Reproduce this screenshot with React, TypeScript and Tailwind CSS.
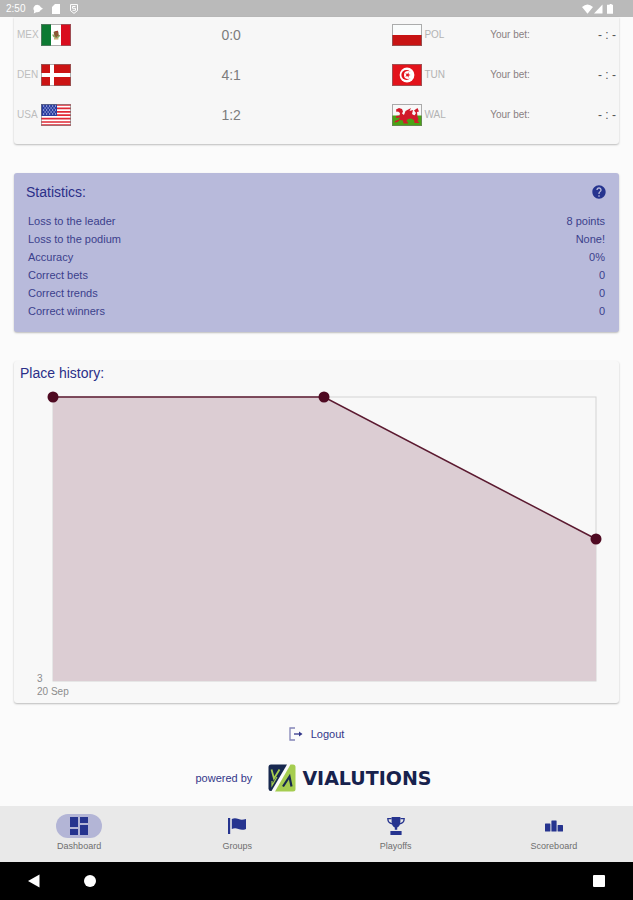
import type { ReactNode } from "react";
import { MdDashboard, MdHelp } from "react-icons/md";

function FlagFrame({ children }: { children: ReactNode }) {
  return (
    <svg viewBox="0 0 30 22" className="h-[22px] w-[30px] shrink-0" aria-hidden="true">
      {children}
      <rect x="0.5" y="0.5" width="29" height="21" fill="none" stroke="#777" strokeOpacity="0.6" />
    </svg>
  );
}

const flags: Record<string, ReactNode> = {
  MEX: (
    <>
      <rect width="30" height="22" fill="#fff" />
      <rect width="10" height="22" fill="#0d7a33" />
      <rect x="20" width="10" height="22" fill="#d90d1e" />
      <path d="M12 10.5a3.3 3.5 0 0 0 6.4.5" fill="none" stroke="#8fa860" strokeWidth="1.6" />
      <path d="M12.6 8q2.4-2 4.6-.4l.6 3.8-2.6 2.2-1.8-1.6z" fill="#8a5a34" />
      <path d="M14.5 7.6l2-1 .8 2z" fill="#a7322c" />
      <path d="M13 14.8h4.4" stroke="#c9a56a" strokeWidth="1.4" />
    </>
  ),
  DEN: (
    <>
      <rect width="30" height="22" fill="#cc1414" />
      <path d="M0 11h30M11 0v22" stroke="#fff" strokeWidth="4" />
    </>
  ),
  USA: (
    <>
      <rect width="30" height="22" fill="#fff" />
      <path
        d="M0 1h30M0 4.4h30M0 7.8h30M0 11.2h30M0 14.6h30M0 18h30M0 21h30"
        stroke="#e02a36"
        strokeWidth="1.7"
      />
      <rect width="16" height="12" fill="#2a3da0" />
      <path
        d="M2 2h13M3.5 4h11M2 6h13M3.5 8h11M2 10h13"
        stroke="#dfe4ff"
        strokeWidth="1"
        strokeDasharray="1.2 1.8"
      />
    </>
  ),
  POL: (
    <>
      <rect width="30" height="22" fill="#fafcfc" />
      <rect y="11" width="30" height="11" fill="#c81414" />
    </>
  ),
  TUN: (
    <>
      <rect width="30" height="22" fill="#e3131b" />
      <circle cx="15" cy="11" r="7.4" fill="#fff" />
      <circle cx="14.4" cy="11" r="5" fill="#e3131b" />
      <circle cx="16" cy="11" r="4" fill="#fff" />
      <path d="M18.6 11l-2 .7v2l-1.3-1.6-2 .6 1.2-1.7-1.2-1.7 2 .6 1.3-1.6v2z" fill="#e3131b" />
    </>
  ),
  WAL: (
    <>
      <rect width="30" height="22" fill="#f8f8f8" />
      <rect y="11.5" width="30" height="10.5" fill="#4aa316" />
      <path
        d="M4 5.5l3-1.5 3 1 1 2.5-1 2 2 1.5 1.5-4L19 4l-1.5 3L21 6l-1 4 2.5 1.5L24 9l-2-2.5L25.5 4 27 7.5l-2 .5.5 4.500 1 2.5-1 2.5 1.5.5v1h-4.500l-.5-3-3-1.5-3 .5-1.5 2 1.5 1.5v1h-4.500l-.5-3-3-.5-2.5 2-3 .5.5-1.5L7 15.5l1-2-4 .5v-2l3.5-.5.5-2.5-2-1.5L4.5 8z"
        fill="#d11a2a"
      />
      <path d="M12.5 11l3-4.500 3.500 3.500-2 4z" fill="#d11a2a" />
    </>
  ),
};

const matches = [
  { home: "MEX", score: "0:0", away: "POL" },
  { home: "DEN", score: "4:1", away: "TUN" },
  { home: "USA", score: "1:2", away: "WAL" },
];

const stats = [
  { label: "Loss to the leader", value: "8 points" },
  { label: "Loss to the podium", value: "None!" },
  { label: "Accuracy", value: "0%" },
  { label: "Correct bets", value: "0" },
  { label: "Correct trends", value: "0" },
  { label: "Correct winners", value: "0" },
];

const navItems = [
  { label: "Dashboard", icon: <MdDashboard className="size-6" />, active: true },
  {
    label: "Groups",
    icon: (
      <svg viewBox="0 0 20 20" className="size-5" fill="currentColor">
        <rect x="1" y="2" width="2.2" height="16" />
        <path d="M4.8 3c2.4-1.3 4.4-1 6.8.1 2.2 1 4.4.9 7.4-.1v10c-2.6 1.1-5 1.1-7.6.1-2.4-1-4.2-1-6.6-.1z" />
      </svg>
    ),
  },
  {
    label: "Playoffs",
    icon: (
      <svg viewBox="0 0 20 20" className="size-5" fill="currentColor">
        <path d="M5.6 1h8.8v4.6c0 3.2-1.4 5.2-3.2 5.9v2.3H8.8v-2.3C7 10.8 5.6 8.8 5.6 5.6z" />
        <path
          d="M5.6 2.6H1.8c0 3 1.6 4.8 4.4 5.2M14.4 2.6h3.8c0 3-1.6 4.8-4.4 5.2"
          fill="none"
          stroke="currentColor"
          strokeWidth="1.3"
        />
        <rect x="4.4" y="15" width="11.2" height="4" rx="0.5" />
      </svg>
    ),
  },
  {
    label: "Scoreboard",
    icon: (
      <svg viewBox="0 0 20 20" className="size-5" fill="currentColor">
        <rect x="1" y="7.5" width="5.4" height="8" rx="0.5" />
        <rect x="7.4" y="4.5" width="5.2" height="11" rx="0.5" />
        <rect x="13.6" y="9" width="5.4" height="6.5" rx="0.5" />
      </svg>
    ),
  },
];

function StatusBar() {
  return (
    <header className="flex h-[17px] items-center justify-between bg-[#bababa] pr-[19px] pl-1.5 text-white">
      <div className="flex items-center gap-2">
        <span className="text-[10px] leading-3">2:50</span>
        <svg viewBox="0 0 10 10" className="size-2.5" fill="currentColor">
          <path d="M4.2.8a4 3.8 0 0 1 3.7 2.5L10 4.8 7.8 6a4 3.8 0 0 1-4.6 2.2L.8 9.4 1.2 6.800A4 3.8 0 0 1 4.2.8z" />
        </svg>
        <svg viewBox="0 0 10 10" className="size-2.5" fill="currentColor">
          <path d="M4 0h5v10H1V3z" />
        </svg>
        <svg viewBox="0 0 10 10" className="size-2.5" fill="none" stroke="currentColor">
          <path d="M1.5.6h7v6L5 9.4 1.5 6.6zM6.5 2.5h-3v1.8h3v2H3.5" />
        </svg>
      </div>
      <svg viewBox="0 0 32 10" className="h-2.5 w-8" fill="currentColor">
        <path d="M0 3q5.5-5 11 0L5.5 9.8zM12 9.5L20.5.5v9zM26.5.8h1.2V0h2v.8H31v9h-6v-9z" />
      </svg>
    </header>
  );
}

function Matches() {
  return (
    <section className="rounded-b-[3px] bg-[#f7f7f7] px-[3px] pt-[7px] shadow-[0_1px_2px_rgba(0,0,0,0.25)]">
      <table className="w-full table-fixed border-collapse">
        <colgroup>
          <col className="w-[12.5%]" />
          <col className="w-[46.5%]" />
          <col className="w-[20%]" />
          <col className="w-[12%]" />
          <col className="w-[9%]" />
        </colgroup>
        <tbody>
          {matches.map((m) => (
            <tr key={m.home} className="h-10 align-top text-[10px] leading-[22px]">
              <td>
                <div className="flex items-center gap-0.5 text-[#bdbdbd]">
                  <span className="w-[22px]">{m.home}</span>
                  <FlagFrame>{flags[m.home]}</FlagFrame>
                </div>
              </td>
              <td className="text-center text-sm leading-[22px] text-[#7c7c7c]">{m.score}</td>
              <td>
                <div className="flex items-center gap-0.5 pl-[22px] text-[#b3b3b3]">
                  <FlagFrame>{flags[m.away]}</FlagFrame>
                  <span>{m.away}</span>
                </div>
              </td>
              <td className="text-[#8a7f82]">Your bet:</td>
              <td className="text-right text-xs leading-[22px] text-[#555]">- : -</td>
            </tr>
          ))}
        </tbody>
      </table>
    </section>
  );
}

function Statistics() {
  return (
    <section className="rounded-[3px] bg-[#b8badb] px-3 pt-[9px] pb-3 shadow-[0_1px_2px_rgba(0,0,0,0.25)]">
      <div className="flex items-center justify-between">
        <h2 className="text-sm text-[#2b2f88]">Statistics:</h2>
        <button type="button" aria-label="Help" className="text-[#26348f]">
          <MdHelp className="size-4" />
        </button>
      </div>
      <table className="mt-2.5 w-full text-[11px] leading-[18px] text-[#3b3f8c]">
        <tbody>
          {stats.map((s) => (
            <tr key={s.label}>
              <th scope="row" className="pl-0.5 text-left font-normal">
                {s.label}
              </th>
              <td className="pr-0.5 text-right">{s.value}</td>
            </tr>
          ))}
        </tbody>
      </table>
    </section>
  );
}

function PlaceHistory() {
  return (
    <section className="rounded-[3px] bg-[#f8f8f8] pt-0.5 shadow-[0_1px_2px_rgba(0,0,0,0.25)]">
      <h2 className="pl-1.5 text-sm text-[#2b2f88]">Place history:</h2>
      <svg viewBox="0 0 605 320" className="block w-full" role="img" aria-label="Place history">
        <rect x="39" y="14" width="543" height="284" fill="none" stroke="#d4d4d4" />
        <path d="M39 14H310L582 156V298H39z" fill="#dccdd3" />
        <path d="M39 14H310L582 156" fill="none" stroke="#5b1a30" strokeWidth="1.5" />
        <g fill="#4f0a22">
          <circle cx="39" cy="14" r="5.5" />
          <circle cx="310" cy="14" r="5.5" />
          <circle cx="582" cy="156" r="5.5" />
        </g>
        <g fill="#8c8c8c" fontSize="10">
          <text x="23" y="299">3</text>
          <text x="23" y="312">20 Sep</text>
        </g>
      </svg>
    </section>
  );
}

function VialutionsLogo() {
  return (
    <svg viewBox="0 0 28 28" className="size-7" aria-hidden="true">
      <path d="M3 .5H19L3.5 27Q.5 27.5.5 24.500V3Q.5.5 3 .5z" fill="#17284f" />
      <path d="M25 27.5H7L22.500.5H25Q27.5.5 27.5 3V25Q27.5 27.5 25 27.500z" fill="#a5cd50" />
      <path d="M3.5 5.5L6 14.5 11.500 5.500" fill="none" stroke="#a5cd50" strokeWidth="1.8" />
      <path d="M4 17v4.500L9 13" fill="none" stroke="#a5cd50" strokeWidth="1.200" />
      <path d="M15 22.500L21.500 12.500 23.500 22.500" fill="none" stroke="#17284f" strokeWidth="2.200" />
    </svg>
  );
}

function BottomNav() {
  return (
    <nav className="grid h-14 grid-cols-4 bg-[#e9e9e9]">
      {navItems.map((item) => (
        <button
          key={item.label}
          type="button"
          className="flex flex-col items-center gap-0.5 pt-2 text-[#26348f]"
        >
          <span
            className={
              item.active
                ? "flex h-6 w-[46px] items-center justify-center rounded-full bg-[#b3b5d6]"
                : "flex h-6 w-[46px] items-center justify-center"
            }
          >
            {item.icon}
          </span>
          <span className="text-[9px] leading-3 text-[#6e6e6e]">{item.label}</span>
        </button>
      ))}
    </nav>
  );
}

export default function App() {
  return (
    <div className="bg-[#fbfbfb] font-['Liberation_Sans',Arial,sans-serif]">
      <StatusBar />
      <main className="px-3.5">
        <div className="flex flex-col gap-[29px]">
          <Matches />
          <Statistics />
          <PlaceHistory />
        </div>
        <div className="mt-5 flex justify-center">
          <button
            type="button"
            className="flex h-[22px] items-center gap-2 text-[11px] text-[#33378a]"
          >
            <svg viewBox="0 0 14 14" className="size-3.5" fill="none" stroke="currentColor">
              <path d="M6 1H1v12h5" strokeOpacity="0.6" strokeWidth="1.3" />
              <path d="M5 7h7" strokeWidth="1.3" />
              <path d="M10 4.5L13.5 7 10 9.5z" fill="currentColor" stroke="none" />
            </svg>
            Logout
          </button>
        </div>
        <div className="mt-[19px] mb-3.5 flex items-center justify-center pr-1.5">
          <span className="text-[11px] text-[#33378a]">powered by</span>
          <a href="#vialutions" className="ml-4 flex h-7 items-center gap-1.5">
            <VialutionsLogo />
            <span className="font-['DejaVu_Sans',Verdana,sans-serif] text-[19px] font-bold text-[#17224d]">
              VIALUTIONS
            </span>
          </a>
        </div>
      </main>
      <BottomNav />
      <div className="flex h-[38px] items-center bg-black px-7">
        <button type="button" aria-label="Back">
          <svg viewBox="0 0 12 14" className="h-3.5 w-3" fill="#fff">
            <path d="M0 7L11.5.5v13z" />
          </svg>
        </button>
        <button type="button" aria-label="Home" className="ml-11 size-3 rounded-full bg-white" />
        <button type="button" aria-label="Recent apps" className="ml-auto size-3 rounded-[1px] bg-white" />
      </div>
    </div>
  );
}
